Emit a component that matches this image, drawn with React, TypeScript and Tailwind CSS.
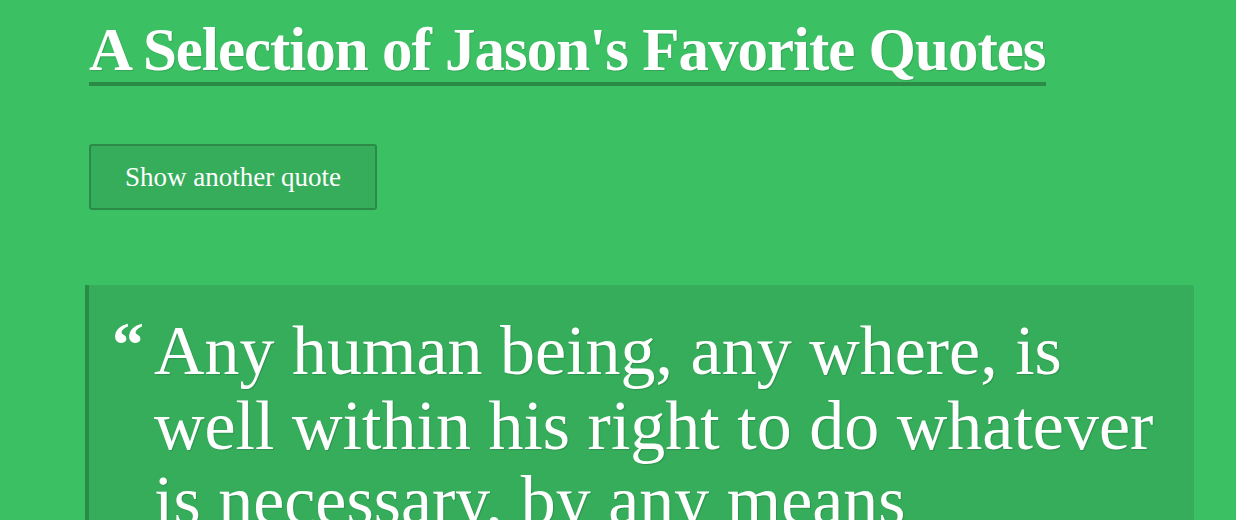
export default function App() {
  return (
    <div className="min-h-screen w-full bg-[#3bc163] overflow-hidden" style={{ fontFamily: '"Liberation Serif", serif' }}>
      <div className="pl-[85px] pr-[42px]">
        <h1 className="ml-[4px] mt-[18px] inline-block whitespace-nowrap border-b-4 border-[#2b8a46] text-[61px] font-bold leading-[64px] tracking-[-1px] text-white [text-shadow:1px_1px_1px_rgba(0,0,0,0.15)]">
          A Selection of Jason's Favorite Quotes
        </h1>

        <div className="mt-[58px] ml-[4px]">
          <button className="h-[66px] w-[288px] rounded-[3px] border-2 border-[#2b8a46] bg-[#35ad5a] text-[27px] text-white">
            Show another quote
          </button>
        </div>

        <div className="mt-[75px] flex rounded-r-[3px] border-l-4 border-[#2b8a46] bg-[#35ad5a] pl-[23px] pt-[28px] pb-[40px]">
          <span className="w-[42px] shrink-0 text-[64px] font-bold leading-[64px] text-white">“</span>
          <p className="text-[70px] leading-[75px] text-white whitespace-nowrap [text-shadow:1px_1px_1px_rgba(0,0,0,0.15)]">
            Any human being, any where, is
            <br />
            well within his right to do whatever
            <br />
            is necessary, by any means
            <br />
            necessary.
          </p>
        </div>
      </div>
    </div>
  );
}
